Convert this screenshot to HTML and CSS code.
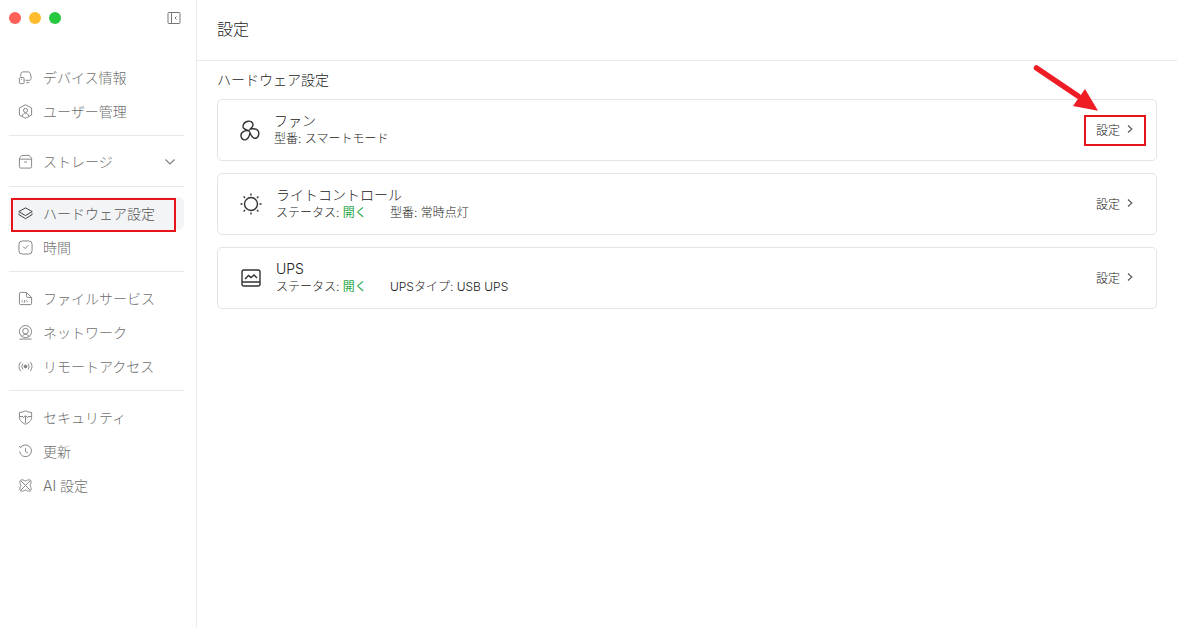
FILE: index.html
```html
<!DOCTYPE html>
<html lang="ja">
<head>
	<meta charset="utf-8" />
	<title>設定</title>
	<link rel="stylesheet" href="styles.css">
</head>
<body>

<div class="window">
	<aside class="sidebar">
		<div class="titlebar">
			<div class="lights">
				<span class="light red"></span>
				<span class="light yellow"></span>
				<span class="light green"></span>
			</div>
			<svg class="icon-small" viewBox="0 0 14 14"><rect x="1" y="1.500" width="12" height="11" rx="1"/><path d="M4.500 1.500v11M9.500 5.500L8 7l1.500 1.500"/></svg>
		</div>

		<nav class="nav">
			<div class="group">
				<div class="item"><svg viewBox="0 0 16 16"><path d="M3 7V4.500C3 3 4 2 5.500 2H11c1 0 1.500.5 2 1.500l1 4c.5 2-.5 3.500-2 3.500H8"/><rect x="1.500" y="8" width="5" height="6.500" rx="1"/><path d="M3.500 10h1M9 13.500h3"/></svg>デバイス情報</div>
				<div class="item"><svg viewBox="0 0 16 16"><path d="M8 .8l6.500 3.400v7.600L8 15.200l-6.500-3.400V4.200z"/><circle cx="8" cy="6.800" r="2.200"/><path d="M4.500 12.800c.5-2 2-3 3.500-3s3 1 3.500 3"/></svg>ユーザー管理</div>
			</div>
			<div class="group">
				<div class="item item-storage"><svg viewBox="0 0 16 16"><path d="M4 1.500h8l2.500 3v9a1.500 1.500 0 0 1-1.500 1.500H3a1.500 1.500 0 0 1-1.500-1.500v-9z"/><path d="M1.500 5.500h13M6.500 8.500h3"/></svg>ストレージ<svg class="chevron" viewBox="0 0 12 12"><path d="M1.500 3.500L6 8l4.500-4.500"/></svg></div>
			</div>
			<div class="group">
				<div class="item active"><svg viewBox="0 0 16 16"><path d="M8 2l7.200 4-7.200 4.200L.8 6z"/><path d="M1 8v1.200L8 13.500l7-4.300V8"/></svg>ハードウェア設定</div>
				<div class="item"><svg viewBox="0 0 16 16"><rect x="1" y="1" width="14" height="14" rx="3.500"/><path d="M5.500 7l2.200 2.200L11 5.500"/></svg>時間</div>
			</div>
			<div class="group">
				<div class="item"><svg viewBox="0 0 16 16"><path d="M1.500 3A1.500 1.500 0 0 1 3 1.500h6l5.500 5.500v6a1.500 1.500 0 0 1-1.500 1.500H3A1.500 1.500 0 0 1 1.500 13z"/><path d="M9 1.500V5a2 2 0 0 0 2 2h3.500M5 10l-1 1 1 1M7.500 9.500l-1 3M9 10l1 1-1 1"/></svg>ファイルサービス</div>
				<div class="item"><svg viewBox="0 0 16 16"><circle cx="8" cy="7" r="6.500"/><circle cx="8" cy="6.500" r="3"/><path d="M1.500 15h13M4 12.500c1-1.800 2.500-2.500 4-2.500s3 .7 4 2.500"/></svg>ネットワーク</div>
				<div class="item"><svg viewBox="0 0 16 16"><circle class="solid" cx="8" cy="8" r="1.500"/><path d="M5.300 5c-1.500 1.800-1.500 4.200 0 6M10.700 5c1.500 1.800 1.500 4.200 0 6M3 3c-2.500 3-2.500 7 0 10M13 3c2.500 3 2.500 7 0 10"/></svg>リモートアクセス</div>
			</div>
			<div class="group">
				<div class="item"><svg viewBox="0 0 16 16"><path d="M8 .8c2 1.200 4 1.700 6.500 1.800v5.400c0 3-2.500 5.500-6.500 7.200C4 13.500 1.500 11 1.500 8V2.600C4 2.500 6 2 8 .8z"/><path d="M8 14V6.500M5.500 8.500L8 6l2.500 2.500M1.500 7h4M10.500 7h4"/></svg>セキュリティ</div>
				<div class="item"><svg viewBox="0 0 16 16"><path d="M3 3.500A6.300 6.300 0 1 1 1.800 8M1 2.500l2 1.200 1.500-1.800M8 4.500V8l2.500 1.500"/></svg>更新</div>
				<div class="item"><svg viewBox="0 0 16 16"><path d="M4.500 2c2 0 2 1 3.500 1s1.500-1 3.500-1 2.500.5 2.500 2.500-1 2-1 3.500 1 1.500 1 3.500-.5 2.500-2.500 2.500-2-1-3.500-1-1.500 1-3.500 1-2.500-.5-2.500-2.500 1-2 1-3.500-1-1.500-1-3.500.5-2.500 2.500-2.500z"/><path d="M3 3l10 10M13 3L3 13"/></svg>AI 設定</div>
			</div>
		</nav>
	</aside>

	<main class="main">
		<header class="header">設定</header>
		<section class="content">
			<h2 class="section-title">ハードウェア設定</h2>

			<div class="card">
				<svg class="card-icon card-icon-fan" viewBox="2 0 24 24"><path d="M12 12.700C9 11.500 6 11 6 8.700c0-3 2.500-5 5-5.500 2.500-.5 5 1 5 3.800 0 2-2 3-2.800 4.200 1.500-.5 3.500-.5 5.100-.2 2.500.4 3.900 2.700 3.400 5.500-.5 2.300-2 4-4 3.800-2.500-.3-3.500-2.800-4.700-5.600-.5 3.200-1.500 5.900-4 6.900-2 .8-4.300-.5-4.800-2.600-.7-2.700.5-4.800 3-5.900 1.500-.6 3.800-.5 5.800.3"/></svg>
				<div class="card-text">
					<div class="card-title">ファン</div>
					<div class="card-sub"><span>型番: スマートモード</span></div>
				</div>
				<div class="card-action">設定<svg viewBox="0 0 8 10"><path d="M2 1.500L5.800 5 2 8.500"/></svg></div>
			</div>

			<div class="card">
				<svg class="card-icon" viewBox="0 0 24 24"><circle cx="12" cy="12" r="6.500"/><path d="M12 1.500v2M12 20.500v2M1.500 12h2M20.500 12h2M4.600 4.600L6 6M18 18l1.400 1.400M4.600 19.400L6 18M18 6l1.400-1.400"/></svg>
				<div class="card-text">
					<div class="card-title">ライトコントロール</div>
					<div class="card-sub"><span class="status">ステータス: <em>開く</em></span><span>型番: 常時点灯</span></div>
				</div>
				<div class="card-action">設定<svg viewBox="0 0 8 10"><path d="M2 1.500L5.800 5 2 8.500"/></svg></div>
			</div>

			<div class="card">
				<svg class="card-icon" viewBox="0 0 24 24"><rect x="3" y="4" width="18" height="16" rx="2"/><path d="M3 16h18M6 13l3.500-3.500 2.500 2 3-2.500 3 3"/></svg>
				<div class="card-text">
					<div class="card-title">UPS</div>
					<div class="card-sub"><span class="status">ステータス: <em>開く</em></span><span>UPSタイプ: USB UPS</span></div>
				</div>
				<div class="card-action">設定<svg viewBox="0 0 8 10"><path d="M2 1.500L5.800 5 2 8.500"/></svg></div>
			</div>
		</section>
	</main>

	<div class="mark mark-nav"></div>
	<div class="mark mark-action"></div>
	<svg class="arrow" viewBox="0 0 70 50"><path class="arrow-line" d="M4.500 4L46 32"/><path class="arrow-head" d="M66 46.700L41 42 53 25z"/></svg>
</div>

</body>
</html>
```

FILE: styles.css
```css
html, body {
	margin: 0;
	height: 100%;
	background: #fff;
}
body {
	font-family: "Inter", "Noto Sans CJK JP", sans-serif;
	font-size: 14px;
	font-weight: 300;
	color: #222;
}
.window {
	position: relative;
	display: flex;
	width: 1177px;
	height: 627px;
	overflow: hidden;
}
.sidebar {
	width: 196px;
	border-right: 1px solid #ebebed;
}
.titlebar {
	display: flex;
	align-items: center;
	justify-content: space-between;
	height: 36px;
	padding: 0 15px 0 9px;
}
.lights {
	display: flex;
	gap: 8px;
}
.light {
	width: 12px;
	height: 12px;
	border-radius: 50%;
}
.red { background: #ff5f57; }
.yellow { background: #febc2e; }
.green { background: #28c840; }
.icon-small {
	width: 14px;
	height: 14px;
	fill: none;
	stroke: #777;
	stroke-width: 1;
}
.nav {
	padding: 25px 12px 0 9px;
}
.group {
	border-bottom: 1px solid #e8e8ea;
	margin-bottom: 10px;
	padding-bottom: 6px;
}
.group:last-child {
	border-bottom: 0;
}
.item {
	display: flex;
	align-items: center;
	gap: 10px;
	box-sizing: border-box;
	height: 34px;
	padding-left: 9px;
	color: #6e6e6e;
	font-size: 14px;
	line-height: 34px;
	border-radius: 6px;
}
.item-storage {
	padding-bottom: 2px;
}
.item svg {
	width: 15px;
	height: 15px;
	flex: none;
	margin-bottom: 2px;
	fill: none;
	stroke: #808080;
	stroke-width: 1;
}
.item svg.chevron {
	width: 12px;
	height: 12px;
	margin-left: auto;
	margin-right: 8px;
	margin-bottom: 0;
	stroke-width: 1.200;
}
.item svg .solid {
	fill: #808080;
}
.item.active {
	height: 33px;
	margin-bottom: 1px;
	padding-top: 1px;
	background: #f3f4f6;
	color: #555;
}
.item.active svg {
	stroke: #333;
}
.main {
	flex: 1;
	min-width: 0;
}
.header {
	height: 60px;
	padding-left: 20px;
	border-bottom: 1px solid #ebebed;
	font-size: 16px;
	line-height: 59px;
}
.content {
	padding: 0 20px;
}
.section-title {
	margin: 0;
	height: 38px;
	font-size: 14px;
	font-weight: 300;
	line-height: 37px;
}
.card {
	display: flex;
	align-items: center;
	height: 60px;
	margin-bottom: 12px;
	padding: 0 22px 0 21px;
	border: 1px solid #e4e4e7;
	border-radius: 5px;
}
.card-icon {
	width: 24px;
	height: 24px;
	flex: none;
	margin-right: 13px;
	fill: none;
	stroke: #333;
	stroke-width: 1.400;
}
.card-icon-fan {
	margin-right: 11px;
}
.card-text {
	flex: 1;
	min-width: 0;
	padding-bottom: 1px;
}
.card-title {
	font-size: 14px;
	line-height: 18px;
}
.card-sub {
	margin-top: 1px;
	font-size: 12px;
	line-height: 16px;
}
.status {
	display: inline-block;
	width: 114px;
}
.status em {
	font-style: normal;
	font-weight: 400;
	color: #2aa84a;
}
.card-action {
	display: flex;
	align-items: center;
	gap: 6px;
	padding-bottom: 2px;
	font-size: 12px;
	color: #111;
}
.card-action svg {
	width: 8px;
	height: 10px;
	fill: none;
	stroke: #555;
	stroke-width: 1.100;
}
.mark {
	position: absolute;
	box-sizing: border-box;
	border: 2px solid #e8141c;
}
.mark-nav {
	left: 11px;
	top: 198px;
	width: 165px;
	height: 34px;
}
.mark-action {
	left: 1084px;
	top: 115px;
	width: 62px;
	height: 31px;
}
.arrow {
	position: absolute;
	left: 1032px;
	top: 64px;
	width: 70px;
	height: 50px;
}
.arrow-line {
	fill: none;
	stroke: #ee1c25;
	stroke-width: 5.500;
	stroke-linecap: round;
}
.arrow-head {
	fill: #ee1c25;
}
```
